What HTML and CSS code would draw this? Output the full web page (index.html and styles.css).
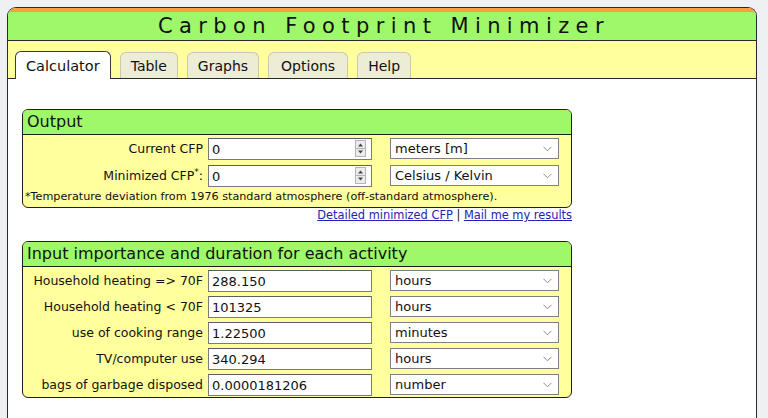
FILE: index.html
```html
<!DOCTYPE html>
<html lang="en">
<head>
<meta charset="utf-8">
<title>Carbon Footprint Minimizer</title>
<link rel="stylesheet" href="styles.css">
</head>
<body>
<div class="app">
  <div class="topband"></div>
  <h1 class="title">Carbon Footprint Minimizer</h1>
  <div class="tabbar">
    <div class="tab active">Calculator</div>
    <div class="tab">Table</div>
    <div class="tab">Graphs</div>
    <div class="tab tab-wide">Options</div>
    <div class="tab">Help</div>
  </div>
  <div class="content">
    <section class="box box-output">
      <div class="box-head">Output</div>
      <div class="box-body">
        <div class="row">
          <label class="lbl">Current CFP</label>
          <span class="field">
            <input class="inp" type="text" value="0">
            <svg class="spinner" width="11" height="17" viewBox="0 0 11 17"><rect x="0.5" y="0.5" width="10" height="16" fill="#ececec" stroke="#b4b4b4"/><line x1="1" y1="8.5" x2="10" y2="8.5" stroke="#b4b4b4"/><path d="M3 6.5 L5.5 3.5 L8 6.5 Z" fill="#444"/><path d="M3 10.5 L5.5 13.5 L8 10.5 Z" fill="#444"/></svg>
          </span>
          <span class="selwrap">
            <select class="sel"><option>meters [m]</option></select>
            <svg class="chev" width="9" height="6" viewBox="0 0 9 6"><path d="M0.5 0.8 L4.5 4.8 L8.5 0.8" fill="none" stroke="#8a8a8a" stroke-width="1"/></svg>
          </span>
        </div>
        <div class="row">
          <label class="lbl">Minimized CFP<sup>*</sup>:</label>
          <span class="field">
            <input class="inp" type="text" value="0">
            <svg class="spinner" width="11" height="17" viewBox="0 0 11 17"><rect x="0.5" y="0.5" width="10" height="16" fill="#ececec" stroke="#b4b4b4"/><line x1="1" y1="8.5" x2="10" y2="8.5" stroke="#b4b4b4"/><path d="M3 6.5 L5.5 3.5 L8 6.5 Z" fill="#444"/><path d="M3 10.5 L5.5 13.5 L8 10.5 Z" fill="#444"/></svg>
          </span>
          <span class="selwrap">
            <select class="sel"><option>Celsius / Kelvin</option></select>
            <svg class="chev" width="9" height="6" viewBox="0 0 9 6"><path d="M0.5 0.8 L4.5 4.8 L8.5 0.8" fill="none" stroke="#8a8a8a" stroke-width="1"/></svg>
          </span>
        </div>
        <div class="note">*Temperature deviation from 1976 standard atmosphere (off-standard atmosphere).</div>
      </div>
    </section>
    <div class="links"><a href="#">Detailed minimized CFP</a> | <a href="#">Mail me my results</a></div>

    <section class="box box-input">
      <div class="box-head">Input importance and duration for each activity</div>
      <div class="box-body">
        <div class="row row-in">
          <label class="lbl">Household heating =&gt; 70F</label>
          <span class="field"><input class="inp" type="text" value="288.150"></span>
          <span class="selwrap"><select class="sel"><option>hours</option></select><svg class="chev" width="9" height="6" viewBox="0 0 9 6"><path d="M0.5 0.8 L4.5 4.8 L8.5 0.8" fill="none" stroke="#8a8a8a" stroke-width="1"/></svg></span>
        </div>
        <div class="row row-in">
          <label class="lbl">Household heating &lt; 70F</label>
          <span class="field"><input class="inp" type="text" value="101325"></span>
          <span class="selwrap"><select class="sel"><option>hours</option></select><svg class="chev" width="9" height="6" viewBox="0 0 9 6"><path d="M0.5 0.8 L4.5 4.8 L8.5 0.8" fill="none" stroke="#8a8a8a" stroke-width="1"/></svg></span>
        </div>
        <div class="row row-in">
          <label class="lbl">use of cooking range</label>
          <span class="field"><input class="inp" type="text" value="1.22500"></span>
          <span class="selwrap"><select class="sel"><option>minutes</option></select><svg class="chev" width="9" height="6" viewBox="0 0 9 6"><path d="M0.5 0.8 L4.5 4.8 L8.5 0.8" fill="none" stroke="#8a8a8a" stroke-width="1"/></svg></span>
        </div>
        <div class="row row-in">
          <label class="lbl">TV/computer use</label>
          <span class="field"><input class="inp" type="text" value="340.294"></span>
          <span class="selwrap"><select class="sel"><option>hours</option></select><svg class="chev" width="9" height="6" viewBox="0 0 9 6"><path d="M0.5 0.8 L4.5 4.8 L8.5 0.8" fill="none" stroke="#8a8a8a" stroke-width="1"/></svg></span>
        </div>
        <div class="row row-in">
          <label class="lbl">bags of garbage disposed</label>
          <span class="field"><input class="inp" type="text" value="0.0000181206"></span>
          <span class="selwrap"><select class="sel"><option>number</option></select><svg class="chev" width="9" height="6" viewBox="0 0 9 6"><path d="M0.5 0.8 L4.5 4.8 L8.5 0.8" fill="none" stroke="#8a8a8a" stroke-width="1"/></svg></span>
        </div>
      </div>
    </section>
  </div>
</div>
</body>
</html>
```

FILE: styles.css
```css
html, body {
  margin: 0;
  padding: 0;
  overflow: hidden;
}
body {
  background: #eef0f1;
  font-family: "DejaVu Sans", Verdana, sans-serif;
  color: #111;
}
.app {
  margin: 7px 0 0 7px;
  width: 750px;
  height: 411px;
  box-sizing: border-box;
  border: 1px solid #2a2a2a;
  border-bottom: none;
  border-radius: 9px 9px 0 0;
  overflow: hidden;
  display: flex;
  flex-direction: column;
  background: #fff;
}
.topband {
  height: 4px;
  background: #f6a03e;
  flex: none;
}
.title {
  margin: 0;
  height: 28px;
  line-height: 28px;
  background: #9ef86a;
  border-bottom: 1px solid #2a2a2a;
  text-align: center;
  font-weight: normal;
  font-size: 21px;
  letter-spacing: 6.4px;
  color: #111;
  flex: none;
  padding-left: 4px;
}
.tabbar {
  height: 37px;
  background: #ffff9e;
  border-bottom: 1px solid #2a2a2a;
  display: flex;
  align-items: flex-end;
  gap: 9px;
  padding-left: 7px;
  flex: none;
}
.tab {
  height: 25px;
  line-height: 26px;
  padding: 0 10px;
  font-size: 14px;
  background: #edecd4;
  border: 1px solid #c9c8b0;
  border-bottom: none;
  border-radius: 6px 6px 0 0;
  color: #111;
}
.tab-wide {
  padding: 0 12px;
}
.tab.active {
  height: 27px;
  line-height: 28px;
  padding: 0 10px;
  font-size: 14.5px;
  background: #fff;
  border-color: #3a3a3a;
  margin-bottom: -1px;
  position: relative;
}
.content {
  flex: 1;
  padding: 30px 0 0 14px;
  background: #fff;
}
.box {
  width: 550px;
  box-sizing: border-box;
  border: 1px solid #1e1e1e;
  border-radius: 6px;
  overflow: hidden;
  background: #ffff9e;
}
.box-head {
  height: 24px;
  line-height: 24px;
  background: #9ef86a;
  border-bottom: 1px solid #1e1e1e;
  font-size: 16px;
  padding-left: 4px;
  color: #111;
}
.box-body {
  display: flex;
  flex-direction: column;
}
.row {
  display: flex;
  align-items: flex-start;
  height: 27px;
  padding-top: 3px;
  box-sizing: border-box;
}
.row-in {
  height: 26px;
}
.lbl {
  width: 180px;
  padding-right: 5px;
  text-align: right;
  font-size: 12.5px;
  line-height: 22px;
  white-space: nowrap;
  color: #111;
}
.lbl sup {
  font-size: 9px;
  line-height: 0;
}
.field {
  position: relative;
  display: block;
  width: 164px;
  height: 22px;
}
.inp {
  width: 164px;
  height: 22px;
  box-sizing: border-box;
  margin: 0;
  border: 1px solid #7a7a7a;
  border-top-color: #5e5e5e;
  padding: 0 3px;
  font-family: "DejaVu Sans", Verdana, sans-serif;
  font-size: 13px;
  color: #111;
  background: #fff;
  outline: none;
}
.spinner {
  position: absolute;
  left: 147px;
  top: 2px;
}
.selwrap {
  position: relative;
  display: block;
  margin-left: 18px;
  width: 169px;
  height: 21px;
}
.sel {
  -webkit-appearance: none;
  appearance: none;
  width: 169px;
  height: 21px;
  box-sizing: border-box;
  margin: 0;
  border: 1px solid #808080;
  border-radius: 0;
  padding: 0 4px;
  font-family: "DejaVu Sans", Verdana, sans-serif;
  font-size: 13px;
  color: #111;
  background: #fff;
}
.chev {
  position: absolute;
  right: 7px;
  top: 8px;
  pointer-events: none;
}
.note {
  height: 18px;
  line-height: 16px;
  font-size: 11.2px;
  padding-left: 2px;
  color: #111;
  white-space: nowrap;
}
.links {
  width: 550px;
  text-align: right;
  font-size: 11.4px;
  line-height: 15px;
  height: 33px;
  color: #111;
}
.links a {
  color: #2323b4;
  text-decoration: underline;
}
```
